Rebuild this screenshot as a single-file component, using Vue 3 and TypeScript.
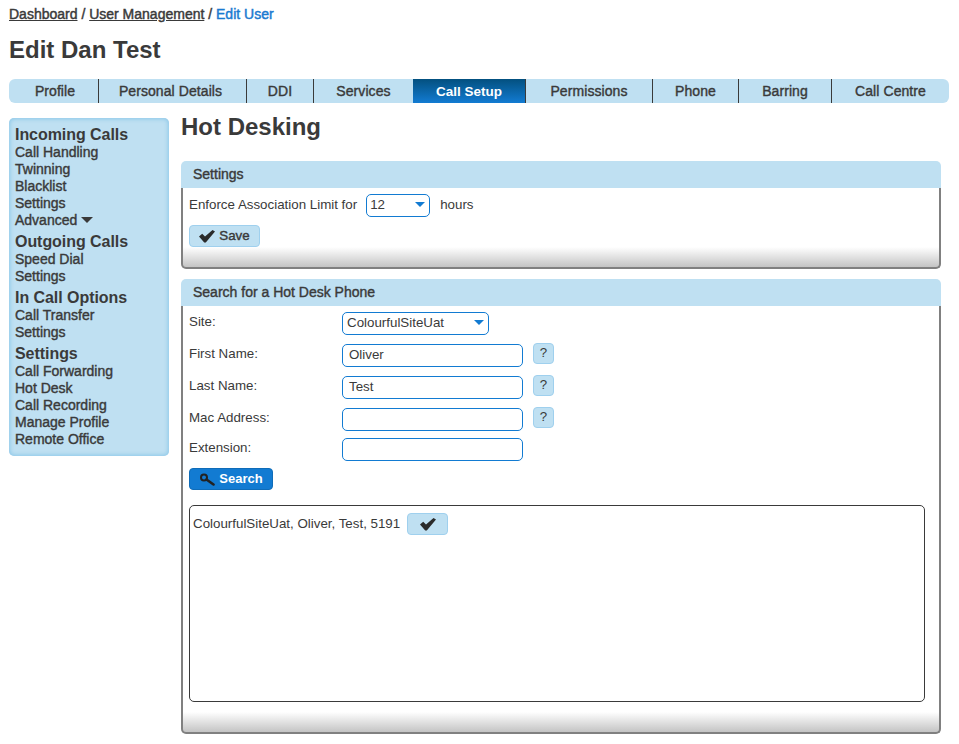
<script setup lang="ts">
const tabs = ['Profile', 'Personal Details', 'DDI', 'Services', 'Call Setup', 'Permissions', 'Phone', 'Barring', 'Call Centre']
const menu = [
  { title: 'Incoming Calls', links: ['Call Handling', 'Twinning', 'Blacklist', 'Settings', 'Advanced'] },
  { title: 'Outgoing Calls', links: ['Speed Dial', 'Settings'] },
  { title: 'In Call Options', links: ['Call Transfer', 'Settings'] },
  { title: 'Settings', links: ['Call Forwarding', 'Hot Desk', 'Call Recording', 'Manage Profile', 'Remote Office'] },
]
const fields = [
  { label: 'First Name:', value: 'Oliver', help: true, tight: false },
  { label: 'Last Name:', value: 'Test', help: true, tight: false },
  { label: 'Mac Address:', value: '', help: true, tight: false },
  { label: 'Extension:', value: '', help: false, tight: true },
]
</script>

<template>
  <div class="page">
    <div class="crumbs"><a>Dashboard</a> / <a>User Management</a> / <span class="current">Edit User</span></div>
    <h1>Edit Dan Test</h1>
    <nav class="tabs">
      <div v-for="t in tabs" :key="t" class="tab" :class="{ active: t === 'Call Setup', before: t === 'Services' }">{{ t }}</div>
    </nav>
    <div class="columns">
      <aside class="side">
        <template v-for="g in menu" :key="g.title">
          <div class="side-title">{{ g.title }}</div>
          <div v-for="l in g.links" :key="l" class="side-link">{{ l }}<span v-if="l === 'Advanced'" class="caret"></span></div>
        </template>
      </aside>
      <main class="main">
        <h2>Hot Desking</h2>
        <section class="panel first">
          <header>Settings</header>
          <div class="body">
            <div class="limit">
              <span>Enforce Association Limit for</span>
              <div class="select small">12<span class="arrow"></span></div>
              <span>hours</span>
            </div>
            <button class="btn save">
              <svg width="16" height="13" viewBox="0 0 16 13"><path d="M0 6.5 3.2 3.8 6 6.6 13.5 0 16 1.6 6.8 12.5 5.2 12.5Z" fill="#2b2b2b"/></svg>
              <span>Save</span>
            </button>
          </div>
        </section>
        <section class="panel second">
          <header>Search for a Hot Desk Phone</header>
          <div class="body">
            <div class="row">
              <label>Site:</label>
              <div class="select wide">ColourfulSiteUat<span class="arrow"></span></div>
            </div>
            <div v-for="f in fields" :key="f.label" class="row field" :class="{ tight: f.tight }">
              <label>{{ f.label }}</label>
              <div class="input">{{ f.value }}</div>
              <button v-if="f.help" class="help">?</button>
            </div>
            <button class="btn search">
              <svg width="17" height="13" viewBox="0 0 17 13"><circle cx="5" cy="4.5" r="3" fill="none" stroke="#222" stroke-width="2"/><path d="M7.5 6.5 14.5 11.5" stroke="#222" stroke-width="2.6" stroke-linecap="round"/></svg>
              <span>Search</span>
            </button>
            <div class="results">
              <span>ColourfulSiteUat, Oliver, Test, 5191</span>
              <button class="btn pick">
                <svg width="16" height="13" viewBox="0 0 16 13"><path d="M0 6.5 3.2 3.8 6 6.6 13.5 0 16 1.6 6.8 12.5 5.2 12.5Z" fill="#2b2b2b"/></svg>
              </button>
            </div>
          </div>
        </section>
      </main>
    </div>
  </div>
</template>

<style>
html, body { margin: 0; background: #fff; }
</style>

<style scoped>
.page {
  width: 940px;
  padding: 6px 10px 0 9px;
  font-family: "Liberation Sans", Arial, sans-serif;
  font-size: 13.33px;
  color: #3a3a3a;
}
.crumbs { height: 16px; line-height: 16px; font-size: 14px; -webkit-text-stroke: 0.45px currentColor; }
.crumbs a { text-decoration: underline; }
.current { color: #1a7ad0; }
h1 { margin: 14px 0 0; height: 28px; line-height: 28px; font-size: 24px; }
.tabs {
  display: grid;
  grid-template-columns: 90px 148px 67px 99px 113px 127px 86px 93px 117px;
  height: 24px;
  margin-top: 15px;
  background: #bfe0f2;
  border-radius: 6px;
  overflow: hidden;
}
.tab {
  display: flex; align-items: center; justify-content: center;
  border-right: 1px solid #3a3a3a;
  font-size: 14px; letter-spacing: 0.08px; -webkit-text-stroke: 0.4px currentColor;
}
.tab:first-child { padding-left: 3px; }
.tab:nth-child(2) { padding-right: 4px; }
.tab:last-child { border-right: 0; }
.tab.before { border-right: 0; }
.tab.active { color: #fff; font-size: 13.5px; font-weight: 700; -webkit-text-stroke: 0; letter-spacing: 0; background: linear-gradient(#03507f, #127bd2); }
.columns { display: flex; margin-top: 15px; align-items: flex-start; }
.side {
  width: 160px; box-sizing: border-box; height: 338px; flex: none;
  padding: 4px 6px 0;
  background: #bfe0f2;
  border-radius: 5px;
  box-shadow: inset 0 0 4px 1px #8cc7e8;
}
.side-title { height: 19px; padding-top: 3px; line-height: 19px; font-size: 16px; font-weight: 700; letter-spacing: -0.05px; }
.side-link { height: 17px; line-height: 17px; font-size: 14px; -webkit-text-stroke: 0.4px currentColor; }
.caret { display: inline-block; margin-left: 4px; border: 6px solid transparent; border-top-color: #3a3a3a; border-bottom: 0; vertical-align: 2px; }
.main { width: 768px; margin-left: 12px; }
h2 { margin: -5px 0 0; height: 28px; line-height: 28px; font-size: 24px; }
.panel { box-sizing: border-box; width: 760px; }
.panel.first { margin-top: 20px; }
.panel.second { margin-top: 10px; }
.panel header {
  height: 27px; line-height: 27px; padding-left: 12px;
  font-size: 14px; -webkit-text-stroke: 0.4px currentColor;
  background: #bfe0f2; border-radius: 5px 5px 0 0;
}
.body {
  padding: 6px 6px 30px;
  border: 2px solid #808080; border-top: 0;
  border-radius: 0 0 5px 5px;
  background: linear-gradient(#fff calc(100% - 20px), #c4c4c4);
}
.first .body { padding-bottom: 20px; }
.limit { display: flex; align-items: center; gap: 9px; height: 23px; }
.limit .select { margin-right: 1px; }
.limit span { position: relative; top: -1px; }
.select {
  box-sizing: border-box; position: relative; height: 23px; line-height: 20px;
  padding-left: 4px; border: 1px solid #127bd2; border-radius: 5px; background: #fff;
}
.small { width: 64px; padding-left: 3px; }
.wide { width: 147px; }
.limit .arrow, .arrow { position: absolute; top: 7px; right: 4px; border-style: solid; border-width: 5px 5.5px 0; border-color: #127bd2 transparent transparent; }
.btn {
  display: flex; align-items: center; justify-content: center; gap: 3px;
  box-sizing: border-box; padding: 0; font: inherit;
  border-radius: 4px; color: #3a3a3a;
  background: #bfe0f2; border: 1px solid #9fd0ee;
}
.btn span { position: relative; top: -1px; }
.save { width: 71px; height: 22px; margin-top: 8px; gap: 4px; -webkit-text-stroke: 0.4px currentColor; }
.row { display: flex; align-items: center; }
.row label { width: 153px; flex: none; margin-top: -4px; }
.field { margin-top: 9px; }
.field.tight { margin-top: 7px; }
.input {
  box-sizing: border-box; width: 181px; height: 23px; line-height: 19px;
  padding-left: 6px; border: 1px solid #127bd2; border-radius: 5px; background: #fff;
}
.help {
  width: 21px; height: 21px; margin: -4px 0 0 10px; padding: 0 0 2px;
  font: inherit; color: #3a3a3a;
  background: #bfe0f2; border: 1px solid #9fd0ee; border-radius: 4px;
}
.search {
  width: 84px; height: 22px; margin-top: 7px; color: #fff;
  background: #127bd2; border-color: #0f6cb8; font-size: 13px; font-weight: 700;
}
.results {
  display: flex; align-items: flex-start; gap: 7px;
  box-sizing: border-box; width: 736px; height: 197px; margin-top: 15px; padding: 7px 3px;
  border: 1px solid #3a3a3a; border-radius: 5px; background: #fff;
}
.results > span { line-height: 22px; }
.pick { width: 41px; height: 22px; }
</style>
